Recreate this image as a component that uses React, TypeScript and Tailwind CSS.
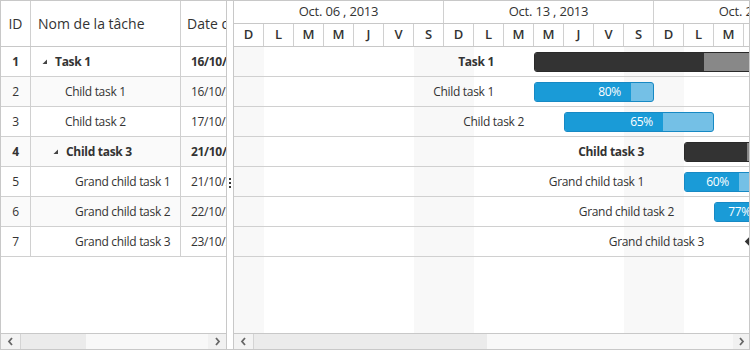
import type { ReactNode } from "react";

type Task = {
  id: number;
  name: string;
  level: number;
  parent?: boolean;
  start: string;
  day: number;
  width: number;
  done: number;
  label?: string;
  milestone?: boolean;
};

const tasks: Task[] = [
  { id: 1, name: "Task 1", level: 0, parent: true, start: "16/10/2013", day: 10, width: 420, done: 169 },
  { id: 2, name: "Child task 1", level: 1, start: "16/10/2013", day: 10, width: 120, done: 96, label: "80%" },
  { id: 3, name: "Child task 2", level: 1, start: "17/10/2013", day: 11, width: 150, done: 98, label: "65%" },
  { id: 4, name: "Child task 3", level: 1, parent: true, start: "21/10/2013", day: 15, width: 120, done: 62 },
  { id: 5, name: "Grand child task 1", level: 2, start: "21/10/2013", day: 15, width: 90, done: 54, label: "60%" },
  { id: 6, name: "Grand child task 2", level: 2, start: "22/10/2013", day: 16, width: 60, done: 46, label: "77%" },
  { id: 7, name: "Grand child task 3", level: 2, start: "23/10/2013", day: 17, width: 0, done: 0, milestone: true },
];

const weeks = ["Oct. 06 , 2013", "Oct. 13 , 2013", "Oct. 20 , 2013"];
const dayNames = ["D", "L", "M", "M", "J", "V", "S"];
const days = Array.from({ length: 21 }, (_, i) => dayNames[i % 7]);

function Chevron({ dir }: { dir: "left" | "right" }) {
  return (
    <svg width="7" height="9" viewBox="0 0 7 9" className="text-[#666]">
      <path
        d={dir === "left" ? "M5 1 L2 4.5 L5 8" : "M2 1 L5 4.5 L2 8"}
        fill="none"
        stroke="currentColor"
        strokeWidth="1.8"
      />
    </svg>
  );
}

function ScrollBar({ thumb, track, children }: { thumb: string; track: string; children?: ReactNode }) {
  return (
    <div className="flex h-[16px] shrink-0 border-t border-[#c8c8c8] bg-[#f3f3f3]">
      <div className="flex w-[20px] items-center justify-center border-r border-[#d4d4d4]">
        <Chevron dir="left" />
      </div>
      <div className={`${thumb} bg-[#ebebeb]`} />
      <div className={`${track} bg-[#f8f8f8]`} />
      <div className="flex flex-1 items-center justify-center bg-[#f1f1f1]">
        <Chevron dir="right" />
      </div>
      {children}
    </div>
  );
}

function TreeArrow() {
  return (
    <svg width="6" height="6" viewBox="0 0 6 6" className="mr-[7px] shrink-0">
      <polygon points="5,0.5 5,5 0.5,5" fill="#444" />
    </svg>
  );
}

function GridPane() {
  return (
    <div className="flex w-[226px] shrink-0 flex-col border-r border-[#c8c8c8]">
      <div className="flex h-[46px] shrink-0 border-b border-[#c8c8c8] text-[14px] text-[#333]">
        <div className="flex w-[30px] items-center justify-center border-r border-[#d0d0d0]">ID</div>
        <div className="flex w-[150px] items-center border-r border-[#d0d0d0] pl-[7px]">Nom de la tâche</div>
        <div className="flex flex-1 items-center overflow-hidden whitespace-nowrap pl-[6px]">Date de début</div>
      </div>
      <div className="flex-1 overflow-hidden">
        {tasks.map((task) => (
          <div
            key={task.id}
            className={`flex h-[30px] border-b border-[#d0d0d0] text-[12px] tracking-[-0.3px] text-[#333] ${
              task.id % 2 === 0 ? "bg-[#fafafa]" : "bg-white"
            } ${task.parent ? "font-bold" : ""}`}
          >
            <div className="flex w-[30px] items-center justify-center border-r border-[#d0d0d0]">{task.id}</div>
            <div
              className="flex w-[150px] items-center border-r border-[#d0d0d0]"
              style={{ paddingLeft: task.parent ? 11 + task.level * 11 : 34 + (task.level - 1) * 10 }}
            >
              {task.parent ? <TreeArrow /> : null}
              {task.name}
            </div>
            <div className="flex flex-1 items-center overflow-hidden whitespace-nowrap pl-[10px]">{task.start}</div>
          </div>
        ))}
      </div>
      <ScrollBar thumb="w-[65px]" track="w-[122px]" />
    </div>
  );
}

function Splitter() {
  return (
    <div className="flex w-[6px] shrink-0 flex-col items-center bg-white pt-[177px]">
      <div className="flex flex-col gap-[2px]">
        <span className="h-[2px] w-[2px] bg-[#333]" />
        <span className="h-[2px] w-[2px] bg-[#333]" />
        <span className="h-[2px] w-[2px] bg-[#333]" />
      </div>
    </div>
  );
}

function TaskBar({ task }: { task: Task }) {
  const left = task.day * 30;
  if (task.milestone) {
    return (
      <>
        <div
          className="absolute top-0 flex h-full items-center justify-end whitespace-nowrap text-[12px] tracking-[-0.3px] text-[#333]"
          style={{ right: `calc(100% - ${left - 40}px)` }}
        >
          {task.name}
        </div>
        <div className="absolute top-[9px] h-[11px] w-[11px] rotate-45 bg-[#333]" style={{ left: left + 3 }} />
      </>
    );
  }
  return (
    <>
      <div
        className={`absolute top-0 flex h-full items-center justify-end whitespace-nowrap text-[12px] tracking-[-0.3px] text-[#333] ${
          task.parent ? "font-bold" : ""
        }`}
        style={{ right: `calc(100% - ${left - 40}px)` }}
      >
        {task.name}
      </div>
      <div
        className={`absolute top-[5px] flex h-[20px] overflow-hidden rounded-[3px] border ${
          task.parent ? "border-[#2a2a2a] bg-[#888]" : "border-[#1789c4] bg-[#74c0e6]"
        }`}
        style={{ left, width: task.width }}
      >
        <div
          className={`flex h-full shrink-0 items-center justify-end pr-[10px] text-[12px] tracking-[-0.3px] text-white ${
            task.parent ? "bg-[#333]" : "bg-[#1a9bd7]"
          }`}
          style={{ width: task.done }}
        >
          {task.label}
        </div>
      </div>
    </>
  );
}

function ChartPane() {
  return (
    <div className="flex min-w-0 flex-1 flex-col border-l border-[#c8c8c8]">
      <div className="flex-1 overflow-hidden">
        <div className="w-[630px]">
          <div className="flex h-[23px] border-b border-[#c8c8c8] text-[13px] tracking-[-0.2px] text-[#333]">
            {weeks.map((w) => (
              <div key={w} className="flex w-[210px] shrink-0 items-center justify-center border-r border-[#d0d0d0]">
                {w}
              </div>
            ))}
          </div>
          <div className="flex h-[23px] border-b border-[#c8c8c8] text-[13px] font-semibold text-[#333]">
            {days.map((d, i) => (
              <div key={i} className="flex w-[30px] shrink-0 items-center justify-center border-r border-[#d0d0d0]">
                {d}
              </div>
            ))}
          </div>
          <div className="relative h-[286px]">
            <div className="absolute inset-0 flex">
              {days.map((_, i) => (
                <div
                  key={i}
                  className={`h-full w-[30px] shrink-0 ${i % 7 === 0 || i % 7 === 6 ? "bg-[#f8f8f8]" : ""}`}
                />
              ))}
            </div>
            {tasks.map((task) => (
              <div key={task.id} className="relative h-[30px] border-b border-[#d0d0d0]">
                <TaskBar task={task} />
              </div>
            ))}
          </div>
        </div>
      </div>
      <ScrollBar thumb="w-[233px]" track="w-[246px]" />
    </div>
  );
}

export default function App() {
  return (
    <div className="flex h-[350px] w-[750px] overflow-hidden border border-[#c8c8c8] bg-white font-['Open_Sans',sans-serif]">
      <GridPane />
      <Splitter />
      <ChartPane />
    </div>
  );
}
